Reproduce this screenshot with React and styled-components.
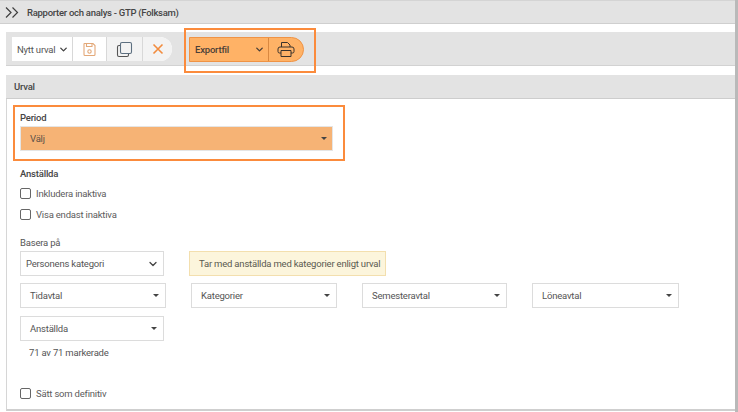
import styled, { createGlobalStyle } from "styled-components";
import { ChevronDown } from "lucide-react";

const GlobalStyle = createGlobalStyle`
  html, body {
    margin: 0;
    padding: 0;
    background: #fff;
    overflow: hidden;
  }
  body {
    font-family: Roboto, "Liberation Sans", sans-serif;
    font-size: 9.5px;
    letter-spacing: -0.2px;
    color: #4a4a4a;
    white-space: nowrap;
  }
`;

const Page = styled.div`
  width: 738px;
  height: 412px;
  box-sizing: border-box;
  padding-right: 3px;
  background: #fff;
  border-right: 3px solid #b9b9b9;
  display: flex;
  flex-direction: column;
  overflow: hidden;
`;

const TitleBar = styled.div`
  height: 24px;
  flex: none;
  box-sizing: border-box;
  background: #e3e3e3;
  border-top: 1px solid #d4d4d4;
  border-bottom: 1px solid #cfcfcf;
  display: flex;
  align-items: center;
  padding-left: 5px;
  gap: 7px;
  margin-right: -3px;
`;

const Title = styled.div`
  font-weight: 500;
  letter-spacing: -0.28px;
  color: #454545;
`;

const Toolbar = styled.div`
  height: 34px;
  flex: none;
  box-sizing: border-box;
  margin: 8px -3px 0 6px;
  background: #e3e3e3;
  border-bottom: 1px solid #d2d2d2;
  padding: 5px 0 0 6px;
  display: flex;
  align-items: flex-start;
`;

const ActionGroup = styled.div`
  display: flex;
  height: 24px;
  background: #fff;
  border-radius: 0 12px 12px 0;
  overflow: hidden;
`;

const NewSelect = styled.div`
  width: 60px;
  box-sizing: border-box;
  padding: 0 3px 0 5px;
  display: flex;
  align-items: center;
  justify-content: space-between;
  color: #555;
`;

const IconButton = styled.div`
  width: ${(props) => props.$width}px;
  display: flex;
  align-items: center;
  justify-content: center;
  background: ${(props) => props.$bg};
  border-left: 1px solid #d8d8d8;
  box-sizing: border-box;
`;

const ExportWrap = styled.div`
  position: relative;
  margin-left: 17px;
`;

const ExportGroup = styled.div`
  width: 115px;
  height: 25px;
  box-sizing: border-box;
  display: flex;
  background: #ffb266;
  border: 1px solid #ef9345;
  border-radius: 0 13px 13px 0;
  color: #4a4038;
`;

const ExportSelect = styled.div`
  width: 79px;
  box-sizing: border-box;
  padding: 0 3px 0 5px;
  display: flex;
  align-items: center;
  justify-content: space-between;
  font-weight: 500;
  border-right: 1px solid #d98840;
`;

const PrintButton = styled.div`
  flex: 1;
  display: flex;
  align-items: center;
  padding-left: 8px;
`;

const Marker = styled.div`
  position: absolute;
  top: ${(props) => props.$top}px;
  left: ${(props) => props.$left}px;
  right: ${(props) => props.$right}px;
  bottom: ${(props) => props.$bottom}px;
  border: 2px solid #fb8b3c;
  pointer-events: none;
`;

const Panel = styled.div`
  flex: 1;
  margin: 9px -3px 1px 6px;
  box-sizing: border-box;
  border-left: 1px solid #d6d6d6;
  border-bottom: 2px solid #cfcfcf;
  display: flex;
  flex-direction: column;
`;

const PanelHead = styled.div`
  height: 24px;
  flex: none;
  box-sizing: border-box;
  margin-left: -1px;
  padding-left: 8px;
  background: #e3e3e3;
  border-bottom: 1px solid #cdcdcd;
  display: flex;
  align-items: center;
  font-weight: 500;
  color: #454545;
`;

const PanelBody = styled.div`
  padding: 13px 0 0 13px;
  display: flex;
  flex-direction: column;
  align-items: flex-start;
`;

const PeriodField = styled.div`
  position: relative;
  width: 313px;
`;

const BoldLabel = styled.div`
  font-weight: 500;
  line-height: 12px;
  color: #454545;
  margin-top: ${(props) => props.$top || 0}px;
`;

const PeriodSelect = styled.div`
  height: 25px;
  margin-top: 2px;
  box-sizing: border-box;
  padding: 0 4px 0 9px;
  background: #f6b375;
  border: 1px solid #e5e5e5;
  display: flex;
  align-items: center;
  justify-content: space-between;
  color: #5b5148;
`;

const CheckRow = styled.label`
  display: flex;
  align-items: center;
  gap: 5px;
  height: 12px;
  margin-top: ${(props) => props.$top}px;
  color: #5c5c5c;
`;

const Check = styled.span`
  width: 11px;
  height: 11px;
  box-sizing: border-box;
  border: 1px solid #666;
  border-radius: 2px;
  background: #fff;
`;

const PlainLabel = styled.div`
  margin-top: 17px;
  line-height: 12px;
  color: #555;
`;

const BaseRow = styled.div`
  display: flex;
  align-items: center;
  margin-top: 2px;
  gap: 25px;
`;

const SelectBox = styled.div`
  width: ${(props) => props.$width || 146}px;
  height: 25px;
  box-sizing: border-box;
  padding: ${(props) => props.$pad || "0 5px 0 9px"};
  border: 1px solid #dcdcdc;
  background: #fff;
  display: flex;
  align-items: center;
  justify-content: space-between;
  color: #555;
`;

const InfoBox = styled.div`
  width: 197px;
  height: 25px;
  box-sizing: border-box;
  padding-left: 9px;
  background: #fcf5dc;
  border: 1px solid #f3dfae;
  display: flex;
  align-items: center;
  color: #5a5a50;
`;

const FilterRow = styled.div`
  display: flex;
  margin-top: ${(props) => props.$top}px;
  gap: 25px;
`;

const CountText = styled.div`
  margin: 6px 0 0 9px;
  line-height: 12px;
  color: #555;
`;

const Caret = styled.span`
  width: 0;
  height: 0;
  border-left: 3.5px solid transparent;
  border-right: 3.5px solid transparent;
  border-top: 3.5px solid #444;
  margin-right: 1px;
`;

const Chevrons = () => (
  <svg width="15" height="13" viewBox="0 0 15 13" fill="none" stroke="#3f3f3f" strokeWidth="1.2">
    <path d="M1 1.5 6 6.5 1 11.5" />
    <path d="M7.5 1.5 12.5 6.5 7.5 11.5" />
  </svg>
);

const SaveIcon = () => (
  <svg width="15" height="15" viewBox="0 0 15 15" fill="none" stroke="#e3a878" strokeWidth="1.1">
    <path d="M2.5 1.5H11L13 3.5V12.5A1 1 0 0 1 12 13.5H3A1 1 0 0 1 2 12.5V2A.5.5 0 0 1 2.5 1.5Z" />
    <path d="M4.5 1.5V4.5H10V1.5" />
    <circle cx="7.5" cy="9.5" r="1.7" />
  </svg>
);

const CopyIcon = () => (
  <svg width="17" height="17" viewBox="0 0 17 17" fill="none">
    <rect x="1.5" y="4.5" width="11" height="11" rx="1.5" stroke="#555" strokeWidth="1.1" />
    <rect x="4.5" y="1.5" width="11" height="11" rx="1.5" fill="#f3f3f3" stroke="#5d6f80" strokeWidth="1.1" />
  </svg>
);

const CloseIcon = () => (
  <svg width="12" height="12" viewBox="0 0 12 12" fill="none" stroke="#f28c3e" strokeWidth="1.6">
    <path d="M1.5 1.5 10.5 10.5M10.5 1.5 1.5 10.5" />
  </svg>
);

const PrinterIcon = () => (
  <svg width="18" height="17" viewBox="0 0 18 17" fill="none" stroke="#3a332c" strokeWidth="1">
    <path d="M4.5 6V1.500H10.500L13 4V6" />
    <path d="M4 12H2.500A1.500 1.500 0 0 1 1 10.500V8A2 2 0 0 1 3 6H15A2 2 0 0 1 17 8V10.500A1.500 1.500 0 0 1 15.500 12H14" />
    <path d="M4 9.500H14V15.500H4Z" />
  </svg>
);

const App = () => {
  return (
    <Page>
      <GlobalStyle />
      <TitleBar>
        <Chevrons />
        <Title>Rapporter och analys - GTP (Folksam)</Title>
      </TitleBar>
      <Toolbar>
        <ActionGroup>
          <NewSelect>
            Nytt urval
            <ChevronDown size={11} strokeWidth={3} color="#444" />
          </NewSelect>
          <IconButton $width={34} $bg="#fff">
            <SaveIcon />
          </IconButton>
          <IconButton $width={36} $bg="#f3f3f3">
            <CopyIcon />
          </IconButton>
          <IconButton $width={30} $bg="#f3f3f3">
            <CloseIcon />
          </IconButton>
        </ActionGroup>
        <ExportWrap>
          <ExportGroup>
            <ExportSelect>
              Exportfil
              <ChevronDown size={11} strokeWidth={3} />
            </ExportSelect>
            <PrintButton>
              <PrinterIcon />
            </PrintButton>
          </ExportGroup>
          <Marker $top={-9} $left={-5} $right={-12} $bottom={-11} />
        </ExportWrap>
      </Toolbar>
      <Panel>
        <PanelHead>Urval</PanelHead>
        <PanelBody>
          <PeriodField>
            <BoldLabel>Period</BoldLabel>
            <PeriodSelect>
              Välj
              <Caret />
            </PeriodSelect>
            <Marker $top={-7} $left={-7} $right={-12} $bottom={-10} />
          </PeriodField>
          <BoldLabel $top={17}>Anställda</BoldLabel>
          <CheckRow $top={7}>
            <Check />
            Inkludera inaktiva
          </CheckRow>
          <CheckRow $top={9}>
            <Check />
            Visa endast inaktiva
          </CheckRow>
          <PlainLabel>Basera på</PlainLabel>
          <BaseRow>
            <SelectBox $width={144} $pad="0 4px 0 5px">
              Personens kategori
              <ChevronDown size={12} strokeWidth={2.6} color="#444" />
            </SelectBox>
            <InfoBox>Tar med anställda med kategorier enligt urval</InfoBox>
          </BaseRow>
          <FilterRow $top={7}>
            <SelectBox>
              Tidavtal
              <Caret />
            </SelectBox>
            <SelectBox>
              Kategorier
              <Caret />
            </SelectBox>
            <SelectBox $width={145}>
              Semesteravtal
              <Caret />
            </SelectBox>
            <SelectBox $width={147}>
              Löneavtal
              <Caret />
            </SelectBox>
          </FilterRow>
          <FilterRow $top={8}>
            <SelectBox $width={144}>
              Anställda
              <Caret />
            </SelectBox>
          </FilterRow>
          <CountText>71 av 71 markerade</CountText>
          <CheckRow $top={28}>
            <Check />
            Sätt som definitiv
          </CheckRow>
        </PanelBody>
      </Panel>
    </Page>
  );
};

export default App;
